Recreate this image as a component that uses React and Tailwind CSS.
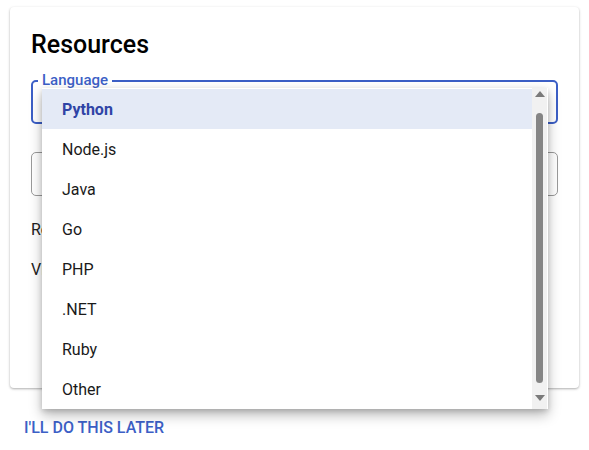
import React from 'react';

const LANGUAGES = ['Python', 'Node.js', 'Java', 'Go', 'PHP', '.NET', 'Ruby', 'Other'];

const App = () => {
  return (
    <div className="relative w-[589px] h-[450px] bg-white overflow-hidden" style={{ fontFamily: 'Roboto, "Liberation Sans", sans-serif' }}>
      {/* Card */}
      <div className="ml-[10px] mt-[7px] w-[569px] h-[381px] rounded-[4px] bg-white shadow-[0_1px_3px_rgba(0,0,0,0.22),0_1px_2px_rgba(0,0,0,0.12)] px-[21px] pt-[22px]">
        <h1 className="text-[25px] leading-[32px] font-medium text-black">Resources</h1>

        {/* Language field */}
        <div className="relative mt-[19px] h-[44px] rounded-[5px] border-2 border-[#3c5fc6]">
          <span className="absolute -top-[11px] left-[5px] bg-white px-[4px] text-[15px] leading-[18px] font-medium text-[#3c5fc6]">
            Language
          </span>
        </div>

        {/* Second field */}
        <div className="mt-[28px] h-[44px] rounded-[5px] border border-[#9a9a9a]"></div>

        <div className="mt-[22px] text-[16px] leading-[24px] text-[#222]">Region</div>
        <div className="mt-[16px] text-[16px] leading-[24px] text-[#222]">Visibility</div>
      </div>

      <button className="ml-[24px] mt-[30px] text-[16px] leading-[20px] font-medium uppercase text-[#3c5fc6]">
        I'll do this later
      </button>

      {/* Dropdown menu */}
      <div className="absolute left-[42px] top-[88px] w-[506px] h-[321px] bg-white shadow-[0_6px_12px_rgba(0,0,0,0.28),0_2px_5px_rgba(0,0,0,0.15)] flex">
        <ul className="flex-1 pt-[1px]">
          {LANGUAGES.map((lang, i) => (
            <li
              key={lang}
              className={`h-[40px] flex items-center pl-[20px] pt-[2px] text-[16px] ${
                i === 0 ? 'bg-[#e4eaf6] font-bold text-[#2f44a6]' : 'text-[#1a1a1a]'
              }`}
            >
              {lang}
            </li>
          ))}
        </ul>
        {/* Scrollbar */}
        <div className="w-[15px] mr-[1px] bg-[#f1f1f1] flex flex-col items-center">
          <div className="mt-[3px] w-0 h-0 border-l-[5px] border-r-[5px] border-b-[6px] border-l-transparent border-r-transparent border-b-[#7a7a7a]"></div>
          <div className="mt-[16px] w-[7px] h-[270px] rounded-full bg-[#858585]"></div>
          <div className="mt-[12px] w-0 h-0 border-l-[5px] border-r-[5px] border-t-[6px] border-l-transparent border-r-transparent border-t-[#7a7a7a]"></div>
        </div>
      </div>
    </div>
  );
};

export default App;
